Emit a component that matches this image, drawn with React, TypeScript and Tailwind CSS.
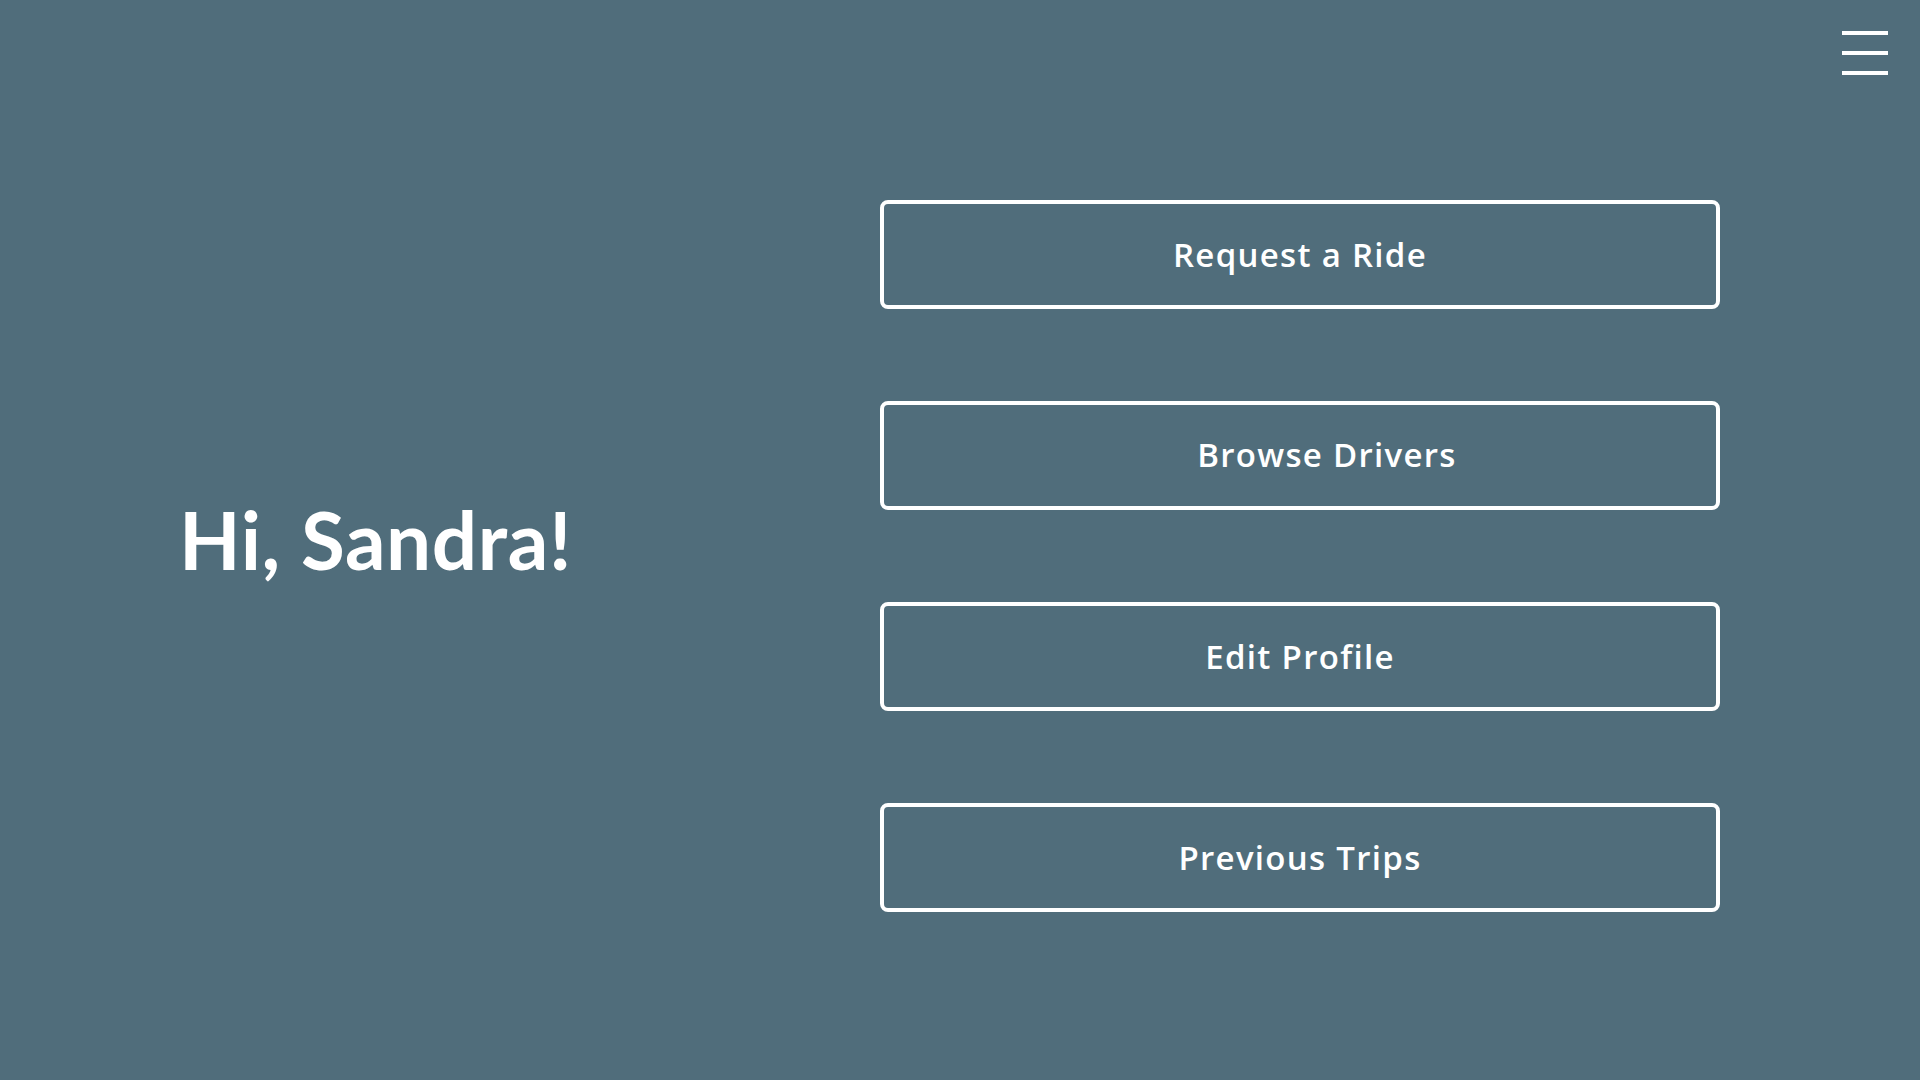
import React from "react";

const buttons = [
  { label: "Request a Ride", extra: "" },
  { label: "Browse Drivers", extra: "pl-[54px] pb-[2px]" },
  { label: "Edit Profile", extra: "" },
  { label: "Previous Trips", extra: "" },
];

export default function App() {
  return (
    <div className="relative flex h-[1080px] w-[1920px] overflow-hidden bg-[#506d7b] text-white">
      <div className="flex w-[880px] items-center pl-[179px] pb-[2px]">
        <h1 className="font-['Lato',sans-serif] text-[80px] font-bold leading-none tracking-[0.6px]">
          Hi, Sandra!
        </h1>
      </div>
      <div className="flex w-[840px] flex-col gap-[92px] pt-[200px]">
        {buttons.map((b) => (
          <button
            key={b.label}
            className={`flex h-[109px] w-[840px] items-center justify-center rounded-[8px] border-[4px] border-white bg-transparent font-['Open_Sans',sans-serif] text-[33px] font-semibold tracking-[1.3px] text-white ${b.extra}`}
          >
            {b.label}
          </button>
        ))}
      </div>
      <button className="absolute right-[32px] top-[31px] flex w-[46px] flex-col gap-[16px]" aria-label="menu">
        <span className="block h-[4px] w-[46px] bg-white" />
        <span className="block h-[4px] w-[46px] bg-white" />
        <span className="block h-[4px] w-[46px] bg-white" />
      </button>
    </div>
  );
}
